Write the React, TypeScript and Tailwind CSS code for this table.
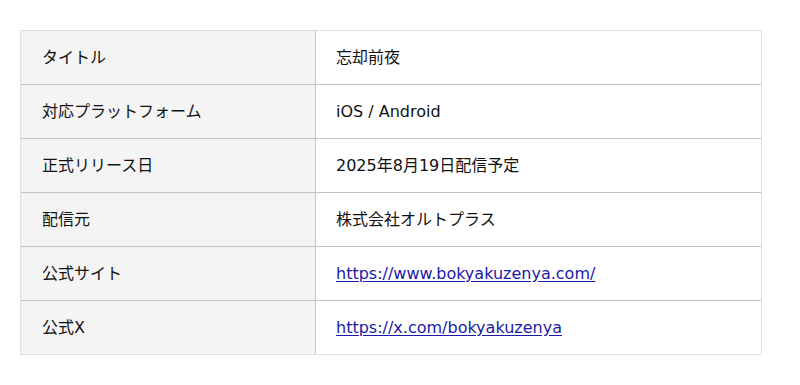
const rows: { label: string; value: string; href?: string }[] = [
  { label: 'タイトル', value: '忘却前夜' },
  { label: '対応プラットフォーム', value: 'iOS / Android' },
  { label: '正式リリース日', value: '2025年8月19日配信予定' },
  { label: '配信元', value: '株式会社オルトプラス' },
  { label: '公式サイト', value: 'https://www.bokyakuzenya.com/', href: 'https://www.bokyakuzenya.com/' },
  { label: '公式X', value: 'https://x.com/bokyakuzenya', href: 'https://x.com/bokyakuzenya' },
];

export default function App() {
  return (
    <div className="w-[800px] h-[385px] bg-white pt-[30px] pl-[20px] font-['DejaVu_Sans','Noto_Sans_CJK_JP',sans-serif] text-[16px] text-[#111]">
      <div className="w-[742px] border border-[#e0e0e0]">
        {rows.map((row, i) => (
          <div
            key={row.label}
            className={`grid grid-cols-[295px_1fr] h-[53px] ${i < rows.length - 1 ? 'border-b border-[#c4c4c4] h-[54px]' : ''}`}
          >
            <div className="bg-[#f4f4f4] border-r border-[#c4c4c4] flex items-center pl-[21px]">
              {row.label}
            </div>
            <div className="flex items-center pl-[20px]">
              {row.href ? (
                <a href={row.href} className="text-[#1a1aa6] underline underline-offset-2">
                  {row.value}
                </a>
              ) : (
                row.value
              )}
            </div>
          </div>
        ))}
      </div>
    </div>
  );
}
